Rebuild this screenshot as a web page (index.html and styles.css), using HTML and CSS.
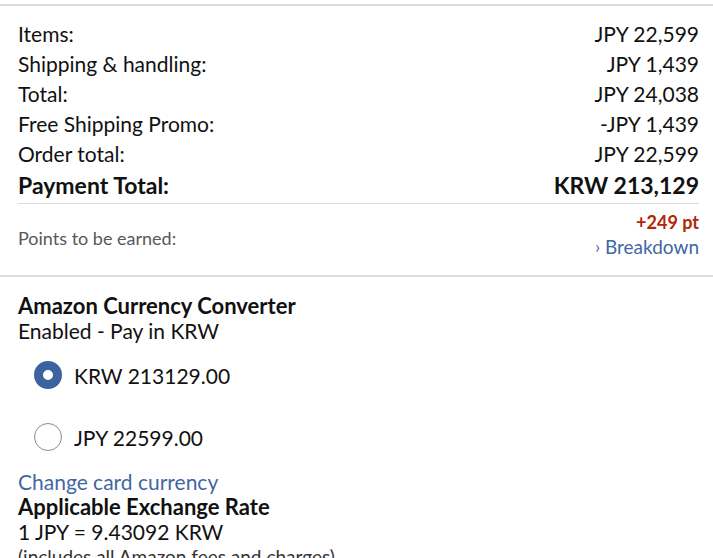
FILE: index.html
```html
<!DOCTYPE html>
<html lang="en">
<head>
<meta charset="utf-8">
<title>Order summary</title>
<link rel="stylesheet" href="styles.css">
</head>
<body>
<div class="page">
  <section class="summary">
    <div class="row"><span>Items:</span><span>JPY 22,599</span></div>
    <div class="row"><span>Shipping &amp; handling:</span><span>JPY 1,439</span></div>
    <div class="row"><span>Total:</span><span>JPY 24,038</span></div>
    <div class="row"><span>Free Shipping Promo:</span><span>-JPY 1,439</span></div>
    <div class="row"><span>Order total:</span><span>JPY 22,599</span></div>
    <div class="row grand"><span>Payment Total:</span><span>KRW 213,129</span></div>
    <div class="points">
      <span class="points-label">Points to be earned:</span>
      <div class="points-value">
        <span class="pts">+249 pt</span>
        <a class="link breakdown" href="#"><span class="chev">›</span> Breakdown</a>
      </div>
    </div>
  </section>
  <section class="converter">
    <div class="bold-title">Amazon Currency Converter</div>
    <div class="line">Enabled - Pay in KRW</div>
    <div class="options">
      <label class="option"><span class="radio checked"></span><span>KRW 213129.00</span></label>
      <label class="option"><span class="radio"></span><span>JPY 22599.00</span></label>
    </div>
    <a class="link line" href="#">Change card currency</a>
    <div class="bold-title">Applicable Exchange Rate</div>
    <div class="line">1 JPY = 9.43092 KRW</div>
    <div class="line note">(includes all Amazon fees and charges)</div>
  </section>
</div>
</body>
</html>
```
FILE: styles.css
```css
html, body {
  margin: 0;
  padding: 0;
  background: #fff;
}
body {
  font-family: "Lato", "Open Sans", sans-serif;
  color: #111;
  font-size: 21px;
}
.page {
  margin-top: 4px;
  border-top: 2px solid #dcdcdc;
}
.summary {
  padding: 13px 14px 0 18px;
  border-bottom: 2px solid #dcdcdc;
}
.row {
  display: flex;
  justify-content: space-between;
  line-height: 30px;
  height: 30px;
}
.row.grand {
  font-weight: 700;
  font-size: 23px;
  line-height: 32px;
  height: 32px;
  border-bottom: 1px solid #dcdcdc;
  padding-bottom: 2px;
}
.points {
  display: flex;
  justify-content: space-between;
  align-items: center;
  padding: 6px 0 14px;
}
.points-label {
  font-size: 18px;
  color: #565959;
  padding-top: 4px;
}
.points-value {
  display: flex;
  flex-direction: column;
  align-items: flex-end;
}
.pts {
  color: #b12704;
  font-weight: 700;
  font-size: 18px;
  line-height: 24px;
}
.link {
  color: #3f67a3;
  text-decoration: none;
}
.breakdown {
  font-size: 19px;
  line-height: 26px;
}
.chev {
  font-size: 17px;
  position: relative;
  top: -1px;
}
.converter {
  padding: 16px 18px 0 18px;
}
.bold-title {
  font-weight: 700;
  font-size: 22px;
  line-height: 25px;
}
.line {
  display: block;
  line-height: 25px;
}
.options {
  display: flex;
  flex-direction: column;
  gap: 34px;
  padding: 18px 0 18px 16px;
}
.option {
  display: flex;
  align-items: center;
  gap: 12px;
  height: 28px;
}
.radio {
  box-sizing: border-box;
  width: 28px;
  height: 28px;
  border-radius: 50%;
  border: 1.5px solid #8a8a8a;
  background: #fff;
  flex: none;
}
.radio.checked {
  border: 9px solid #3b63a0;
}
.note {
  color: #333;
  font-size: 19px;
}
```
